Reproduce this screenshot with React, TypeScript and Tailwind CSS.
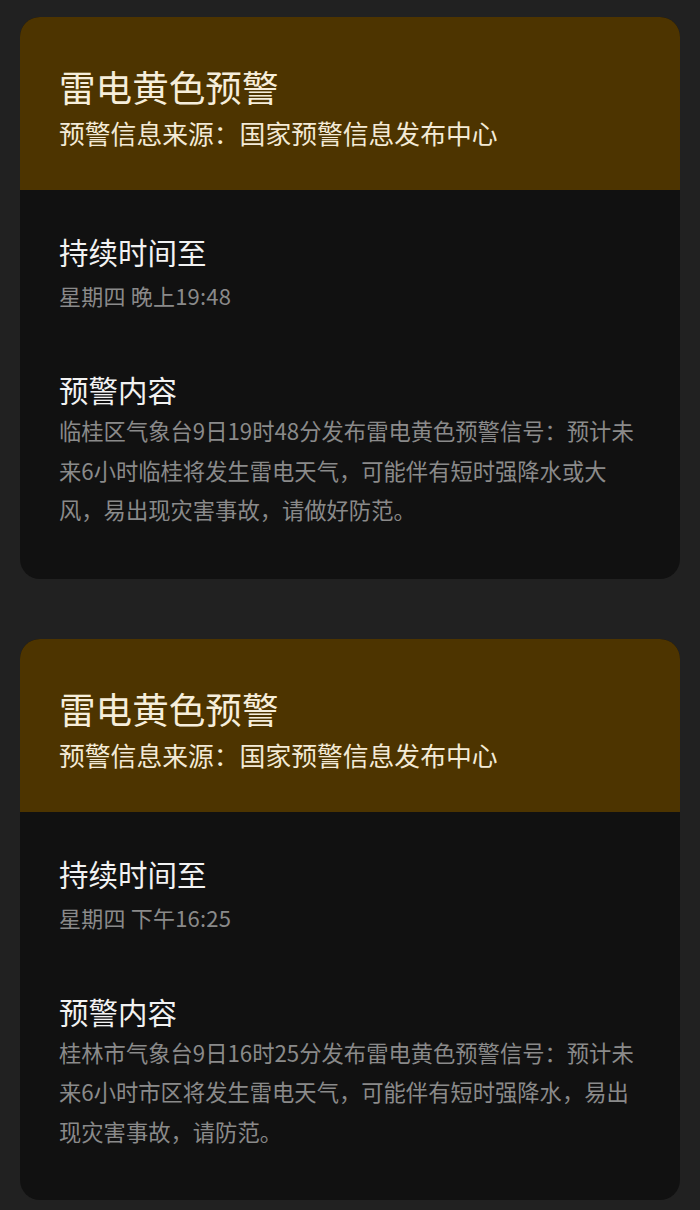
const font = { fontFamily: '"Noto Sans CJK SC", "Noto Sans", sans-serif' };

type Alert = {
  title: string;
  source: string;
  until: string;
  content: string;
};

const alerts: Alert[] = [
  {
    title: "雷电黄色预警",
    source: "预警信息来源：国家预警信息发布中心",
    until: "星期四 晚上19:48",
    content:
      "临桂区气象台9日19时48分发布雷电黄色预警信号：预计未来6小时临桂将发生雷电天气，可能伴有短时强降水或大风，易出现灾害事故，请做好防范。",
  },
  {
    title: "雷电黄色预警",
    source: "预警信息来源：国家预警信息发布中心",
    until: "星期四 下午16:25",
    content:
      "桂林市气象台9日16时25分发布雷电黄色预警信号：预计未来6小时市区将发生雷电天气，可能伴有短时强降水，易出现灾害事故，请防范。",
  },
];

function AlertCard({ alert }: { alert: Alert }) {
  return (
    <div className="rounded-[20px] overflow-hidden bg-[#111111]">
      {/* Header */}
      <div className="bg-[#4d3400] px-[39px] pt-[48px] pb-[33px]">
        <h2 className="text-[36.6px] leading-[44px] text-[#f6eedb]">{alert.title}</h2>
        <p className="text-[25.8px] leading-[48px] text-[#f3ead6]">{alert.source}</p>
      </div>

      {/* Body */}
      <div className="px-[39px] pt-[41px] pb-[49px]">
        <h3 className="text-[29.5px] leading-[40px] text-[#f2f2f2]">持续时间至</h3>
        <p className="mt-[8px] text-[22px] leading-[32px] tracking-[0.2px] text-[#8a8a8a]">{alert.until}</p>

        <h3 className="mt-[58px] text-[29.5px] leading-[40px] text-[#f2f2f2]">预警内容</h3>
        <p className="mt-[2px] pr-[2px] text-[22.3px] leading-[39.5px] text-[#8a8a8a]">
          {alert.content}
        </p>
      </div>
    </div>
  );
}

export default function App() {
  return (
    <div className="min-h-[1210px] w-[700px] bg-[#212121] px-[20px] pt-[17px] pb-[12px]" style={font}>
      <div className="flex flex-col gap-[60px]">
        {alerts.map((a, i) => (
          <AlertCard key={i} alert={a} />
        ))}
      </div>
    </div>
  );
}
